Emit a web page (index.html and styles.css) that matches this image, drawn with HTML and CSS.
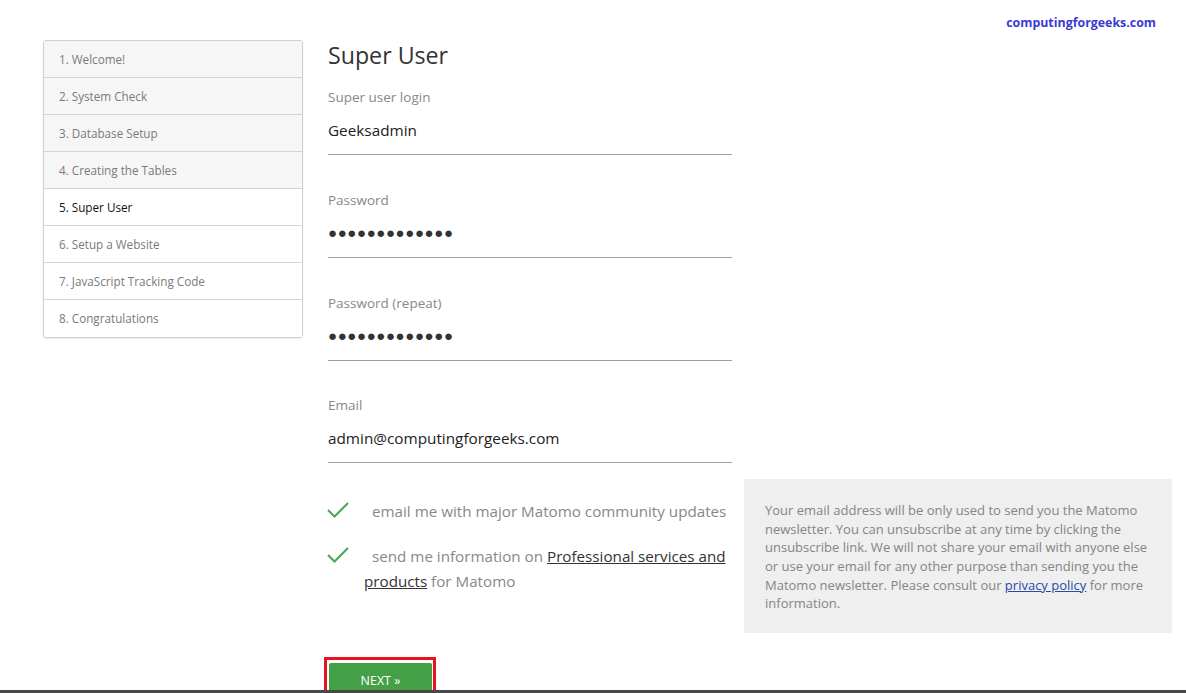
FILE: index.html
```html
<!DOCTYPE html>
<html lang="en">
<head>
    <meta charset="UTF-8">
    <meta name="viewport" content="width=device-width, initial-scale=1.0">
    <title>Matomo Installation - Super User</title>
    <link rel="stylesheet" href="styles.css">
</head>
<body>
    <div class="brand">computingforgeeks.com</div>

    <div class="page">
        <!-- installation steps -->
        <ul class="steps">
            <li class="done">1. Welcome!</li>
            <li class="done">2. System Check</li>
            <li class="done">3. Database Setup</li>
            <li class="done">4. Creating the Tables</li>
            <li class="current">5. Super User</li>
            <li>6. Setup a Website</li>
            <li>7. JavaScript Tracking Code</li>
            <li>8. Congratulations</li>
        </ul>

        <div class="main">
            <h1>Super User</h1>

            <div class="field">
                <label>Super user login</label>
                <div class="input">Geeksadmin</div>
            </div>
            <div class="field">
                <label>Password</label>
                <div class="input dots">&#9679;&#9679;&#9679;&#9679;&#9679;&#9679;&#9679;&#9679;&#9679;&#9679;&#9679;&#9679;&#9679;</div>
            </div>
            <div class="field">
                <label>Password (repeat)</label>
                <div class="input dots">&#9679;&#9679;&#9679;&#9679;&#9679;&#9679;&#9679;&#9679;&#9679;&#9679;&#9679;&#9679;&#9679;</div>
            </div>
            <div class="field">
                <label>Email</label>
                <div class="input">admin@computingforgeeks.com</div>
            </div>

            <div class="newsletter">
                <div class="checks">
                    <div class="check">
                        <svg class="tick" width="22" height="16" viewBox="0 0 22 16"><polyline points="1,8 7.5,14.5 21,1" fill="none" stroke="#4aa552" stroke-width="2"/></svg>
                        <span>email me with major Matomo community updates</span>
                    </div>
                    <div class="check">
                        <svg class="tick" width="22" height="16" viewBox="0 0 22 16"><polyline points="1,8 7.5,14.5 21,1" fill="none" stroke="#4aa552" stroke-width="2"/></svg>
                        <span>send me information on <a href="#">Professional services and products</a> for Matomo</span>
                    </div>
                </div>
                <div class="note">
                    Your email address will be only used to send you the Matomo newsletter. You can unsubscribe at any time by clicking the unsubscribe link. We will not share your email with anyone else or use your email for any other purpose than sending you the Matomo newsletter. Please consult our <a href="#">privacy policy</a> for more information.
                </div>
            </div>

            <div class="highlight">
                <button class="next">NEXT &raquo;</button>
            </div>
        </div>
    </div>

    <div class="taskbar-edge"></div>
</body>
</html>
```

FILE: styles.css
```css
/* general */
* {
    margin: 0;
    padding: 0;
    box-sizing: border-box;
}

body {
    font-family: 'Open Sans', 'Noto Sans', sans-serif;
    background-color: #FFFFFF;
    color: #333;
    overflow: hidden;
    height: 693px;
}

.brand {
    position: absolute;
    top: 14px;
    right: 30px;
    font-size: 12.4px;
    font-weight: bold;
    color: #3a3ad2;
}

.page {
    display: flex;
    align-items: flex-start;
    gap: 25px;
    padding: 40px 0 0 43px;
}

/* steps list */
.steps {
    list-style: none;
    width: 260px;
    border: 1px solid #cfcfcf;
    border-radius: 3px;
    box-shadow: 0 1px 2px rgba(0, 0, 0, 0.08);
    overflow: hidden;
}

.steps li {
    height: 37px;
    line-height: 37px;
    padding-left: 15px;
    font-size: 11.7px;
    color: #7a7a7a;
    border-bottom: 1px solid #d4d4d4;
    background-color: #FFFFFF;
}

.steps li:last-child {
    border-bottom: none;
}

.steps li.done {
    background-color: #f6f6f6;
}

.steps li.current {
    color: #111;
}

/* form */
.main {
    width: 844px;
}

h1 {
    font-size: 23.2px;
    font-weight: normal;
    line-height: 30px;
    color: #333;
    margin-bottom: 17px;
}

.field {
    width: 404px;
    margin-bottom: 34.8px;
}

.field label {
    display: block;
    font-size: 13.5px;
    line-height: 20px;
    color: #888;
    margin-bottom: 10.5px;
}

.field .input {
    font-size: 15.3px;
    line-height: 24px;
    color: #222;
    padding-bottom: 12.5px;
    border-bottom: 1px solid #9e9e9e;
}

.field .dots {
    font-size: 15px;
    letter-spacing: 0.6px;
    color: #333;
}

.newsletter {
    display: flex;
    align-items: flex-start;
    margin-top: -19px;
}

.checks {
    width: 404px;
    padding-top: 20px;
}

.check {
    position: relative;
    font-size: 15.2px;
    line-height: 25px;
    color: #888;
    padding-left: 36px;
    text-indent: 8px;
    margin-bottom: 20px;
}

.check .tick {
    position: absolute;
    left: -1px;
    top: 3px;
}

.check a {
    color: #333;
    text-decoration: underline;
}

.note {
    width: 428px;
    margin-left: 12px;
    background-color: #eeefee;
    border-radius: 2px;
    padding: 22px 21px 20px 21px;
    font-size: 13px;
    line-height: 18.6px;
    color: #858585;
}

.note a {
    color: #2a4aa8;
}

/* next button */
.highlight {
    display: inline-block;
    margin-top: 24px;
    margin-left: -4px;
    border: 3px solid #e8131f;
    padding: 3px 1px 0 2px;
}

.next {
    display: block;
    width: 103px;
    height: 36px;
    border: none;
    border-radius: 2px;
    background-color: #43a047;
    color: #FFFFFF;
    font-family: inherit;
    font-size: 12.5px;
    cursor: pointer;
}

.taskbar-edge {
    position: fixed;
    left: 0;
    right: 0;
    bottom: 0;
    height: 3px;
    background-color: #474747;
}
```
